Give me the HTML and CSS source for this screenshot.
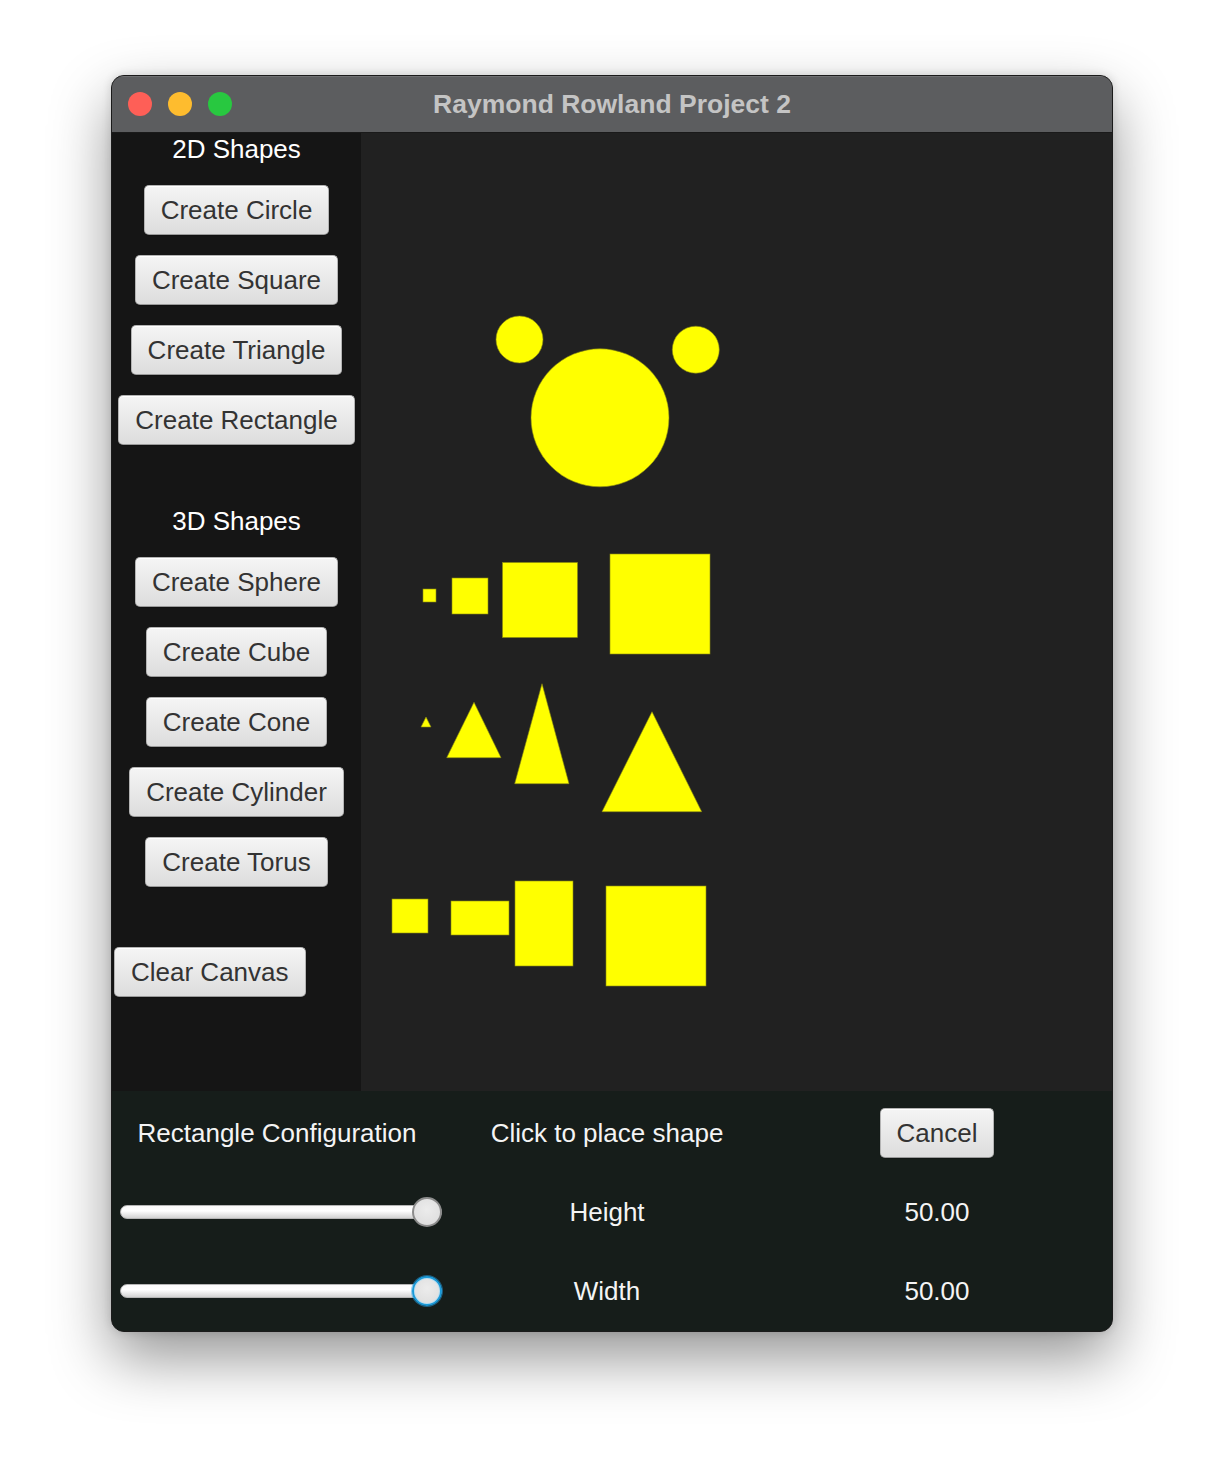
FILE: index.html
```html
<!DOCTYPE html>
<html>
<head>
<meta charset="utf-8">
<title>Raymond Rowland Project 2</title>
<link rel="stylesheet" href="styles.css">
</head>
<body>
<div class="stage">
  <div class="window">
    <div class="titlebar">
      <div class="lights">
        <span class="light red"></span>
        <span class="light yellow"></span>
        <span class="light green"></span>
      </div>
      <div class="title">Raymond Rowland Project 2</div>
    </div>
    <div class="main">
      <div class="sidebar">
        <div class="section-label">2D Shapes</div>
        <button class="btn">Create Circle</button>
        <button class="btn">Create Square</button>
        <button class="btn">Create Triangle</button>
        <button class="btn">Create Rectangle</button>
        <div class="section-label spaced">3D Shapes</div>
        <button class="btn">Create Sphere</button>
        <button class="btn">Create Cube</button>
        <button class="btn">Create Cone</button>
        <button class="btn">Create Cylinder</button>
        <button class="btn">Create Torus</button>
        <button class="btn clear">Clear Canvas</button>
      </div>
      <div class="canvas">
        <svg class="drawing" viewBox="0 0 751 958" width="751" height="958">
          <g fill="#ffff00" stroke="#8a8a10" stroke-width="0.6">
            <circle cx="158.5" cy="206.5" r="23.5"/>
            <circle cx="334.8" cy="216.7" r="23.5"/>
            <circle cx="239" cy="284.8" r="69"/>

            <rect x="62" y="456" width="13" height="13"/>
            <rect x="91" y="445" width="36" height="36"/>
            <rect x="141.5" y="429.5" width="75" height="75"/>
            <rect x="249" y="421" width="100" height="100"/>

            <polygon points="60,594 65,584 70,594"/>
            <polygon points="85.7,624.7 113,569.3 140,624.7"/>
            <polygon points="153.7,650.7 181,550.7 208,650.7"/>
            <polygon points="241,678.7 291,578.7 340.7,678.7"/>

            <rect x="31" y="766" width="36" height="34"/>
            <rect x="90" y="768" width="58" height="34"/>
            <rect x="154" y="748" width="58" height="85"/>
            <rect x="245" y="753" width="100" height="100"/>
          </g>
        </svg>
      </div>
    </div>
    <div class="config">
      <div class="cell">Rectangle Configuration</div>
      <div class="cell">Click to place shape</div>
      <div class="cell"><button class="btn">Cancel</button></div>

      <div class="cell slider-cell">
        <div class="slider">
          <div class="track"></div>
          <div class="thumb"></div>
        </div>
      </div>
      <div class="cell">Height</div>
      <div class="cell">50.00</div>

      <div class="cell slider-cell">
        <div class="slider">
          <div class="track"></div>
          <div class="thumb focused"></div>
        </div>
      </div>
      <div class="cell">Width</div>
      <div class="cell">50.00</div>
    </div>
  </div>
</div>
</body>
</html>
```

FILE: styles.css
```css
html, body {
  margin: 0;
  padding: 0;
  background: #ffffff;
}

body {
  font-family: "Liberation Sans", Arial, sans-serif;
  width: 1224px;
  height: 1480px;
  overflow: hidden;
}

.stage {
  padding: 75px 0 0 111px;
}

.window {
  width: 1002px;
  height: 1257px;
  box-sizing: border-box;
  border: 1px solid #1b1b1b;
  border-radius: 13px;
  overflow: hidden;
  background: #212121;
  box-shadow: 0 26px 60px rgba(0, 0, 0, 0.42), 0 0 10px rgba(0, 0, 0, 0.14);
  display: flex;
  flex-direction: column;
}

.titlebar {
  height: 56px;
  flex: none;
  background: #5c5d5f;
  border-bottom: 1px solid #1a1a1a;
  box-shadow: inset 0 1px 0 rgba(255, 255, 255, 0.12);
  display: flex;
  align-items: center;
  position: relative;
}

.lights {
  display: flex;
  gap: 16px;
  padding-left: 16px;
}

.light {
  width: 24px;
  height: 24px;
  border-radius: 50%;
  display: block;
}
.light.red { background: #fe5f57; }
.light.yellow { background: #febc2e; }
.light.green { background: #28c840; }

.title {
  position: absolute;
  left: 0;
  right: 0;
  top: 0;
  bottom: 0;
  display: flex;
  align-items: center;
  justify-content: center;
  font-weight: bold;
  font-size: 26.5px;
  color: #c4c4c4;
}

.main {
  height: 958px;
  flex: none;
  display: flex;
}

.sidebar {
  width: 249px;
  flex: none;
  background: #151515;
  display: flex;
  flex-direction: column;
  align-items: center;
  gap: 20px;
}

.section-label {
  color: #ffffff;
  font-size: 26px;
  line-height: 32px;
  height: 32px;
}
.section-label.spaced {
  margin-top: 40px;
}

.btn {
  font-family: "Liberation Sans", Arial, sans-serif;
  font-size: 26px;
  line-height: 32px;
  height: 50px;
  box-sizing: border-box;
  padding: 8px 16px;
  color: #333333;
  background: linear-gradient(#f5f5f5, #dddddd);
  border: 1px solid #b4b4b4;
  border-bottom-color: #9a9a9a;
  border-radius: 5px;
  box-shadow: inset 0 1px 0 #ffffff, 0 1px 1px rgba(0, 0, 0, 0.25);
  white-space: nowrap;
  margin: 0;
}

.btn.clear {
  align-self: flex-start;
  margin-left: 2px;
  margin-top: 40px;
}

.canvas {
  flex: 1;
  background: #212121;
}

.drawing {
  display: block;
}

.config {
  flex: 1;
  background: #161d1a;
  padding-top: 2px;
  display: grid;
  grid-template-columns: 330px 330px 330px;
  grid-template-rows: 79px 79px 79px;
  color: #f4f4f4;
  font-size: 26px;
}

.cell {
  display: flex;
  align-items: center;
  justify-content: center;
  line-height: 32px;
}

.slider-cell {
  justify-content: stretch;
  padding-left: 8px;
}

.slider {
  position: relative;
  width: 322px;
  height: 32px;
  display: flex;
  align-items: center;
}

.track {
  width: 100%;
  height: 14px;
  box-sizing: border-box;
  border-radius: 7px;
  border: 1px solid #b5b5b5;
  background: linear-gradient(#fbfbfb 0%, #ffffff 40%, #d3d3d3 100%);
}

.thumb {
  position: absolute;
  right: 0;
  top: 1px;
  width: 30px;
  height: 30px;
  box-sizing: border-box;
  border-radius: 50%;
  border: 2px solid #8c8c8c;
  background: radial-gradient(circle at 50% 40%, #ececec 0%, #e0e0e0 70%, #d2d2d2 100%);
}

.thumb.focused {
  border: 2px solid #1b9ad8;
  box-shadow: 0 0 0 1px rgba(40, 160, 230, 0.5), inset 0 0 0 1px #b9dff2;
}
```
